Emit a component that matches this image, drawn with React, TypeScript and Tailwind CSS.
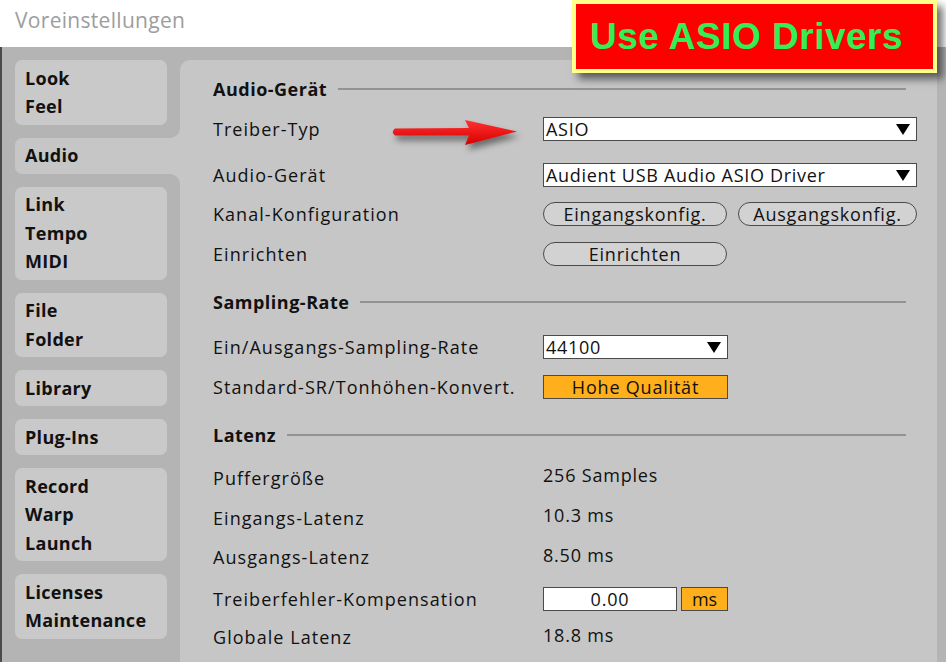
import React from "react";

// Sidebar tab groups
const tabs: string[][] = [
  ["Look", "Feel"],
  ["Audio"],
  ["Link", "Tempo", "MIDI"],
  ["File", "Folder"],
  ["Library"],
  ["Plug-Ins"],
  ["Record", "Warp", "Launch"],
  ["Licenses", "Maintenance"],
];

const Triangle = () => (
  <svg width="14" height="11" viewBox="0 0 14 11" className="shrink-0">
    <polygon points="0,0 14,0 7,11" fill="#000" />
  </svg>
);

const Dropdown: React.FC<{ value: string; className?: string }> = ({ value, className = "" }) => (
  <div
    className={
      "h-[24px] bg-white border-[1.5px] border-[#4a4a4a] flex items-center justify-between pl-[2px] pr-[6px] tracking-[0.7px] " +
      className
    }
  >
    <span>{value}</span>
    <Triangle />
  </div>
);

const Pill: React.FC<{ children: React.ReactNode; className?: string }> = ({ children, className = "" }) => (
  <div
    className={
      "h-[24px] rounded-full bg-[#d2d2d2] border-[1.5px] border-[#4a4a4a] flex items-center justify-center tracking-[0.8px] " +
      className
    }
  >
    {children}
  </div>
);

const Heading: React.FC<{ title: string; className?: string }> = ({ title, className = "" }) => (
  <div className={"h-[28px] flex items-center " + className}>
    <span className="font-bold tracking-[0.5px]">{title}</span>
    <div className="flex-1 h-[2px] bg-[#939393] ml-[11px] mr-[11px]" />
  </div>
);

const Row: React.FC<{ label: string; className?: string; children?: React.ReactNode }> = ({
  label,
  className = "",
  children,
}) => (
  <div className={"h-[24px] flex items-center " + className}>
    <span className="w-[330px] shrink-0 tracking-[1.05px] whitespace-nowrap">{label}</span>
    {children}
  </div>
);

export default function App() {
  return (
    <div className="relative w-[946px] h-[662px] overflow-hidden bg-[#b4b4b4] font-['Open_Sans',sans-serif] text-[18px] text-[#111]">
      {/* Title bar */}
      <div className="h-[47px] bg-white pl-[15px] pt-[5px] text-[21px] leading-[30px] tracking-[0.3px] text-[#9d9d9d]">
        Voreinstellungen
      </div>

      <div className="flex border-l-[2px] border-[#4b4b4b] pl-[13px] pt-[13px] h-[615px]">
        {/* Sidebar */}
        <div className="w-[165px] shrink-0 flex flex-col gap-[13px]">
          {tabs.map((group) => {
            const selected = group[0] === "Audio";
            return (
              <div key={group[0]} className="relative">
                <div
                  className={
                    selected
                      ? "w-[165px] bg-[#c6c6c6] rounded-l-[7px] pl-[10px] pt-[3.5px] pb-[4px] font-bold leading-[28.5px] tracking-[0.3px]"
                      : "w-[152px] bg-[#c9c9c9] rounded-[7px] pl-[10px] pt-[3.5px] pb-[4px] font-bold leading-[28.5px] tracking-[0.3px]"
                  }
                >
                  {group.map((t) => (
                    <div key={t}>{t}</div>
                  ))}
                </div>
                {selected && (
                  <>
                    <div className="absolute right-0 top-[-10px] w-[10px] h-[10px] bg-[#c6c6c6]">
                      <div className="w-full h-full bg-[#b4b4b4] rounded-br-[10px]" />
                    </div>
                    <div className="absolute right-0 bottom-[-10px] w-[10px] h-[10px] bg-[#c6c6c6]">
                      <div className="w-full h-full bg-[#b4b4b4] rounded-tr-[10px]" />
                    </div>
                  </>
                )}
              </div>
            );
          })}
        </div>

        {/* Main panel */}
        <div className="flex-1 mr-[9px] bg-[#c6c6c6] rounded-tl-[10px] pl-[33px] pr-[20px] pt-[15px] flex flex-col">
          <Heading title="Audio-Gerät" />
          <Row label="Treiber-Typ" className="mt-[14px]">
            <Dropdown value="ASIO" className="w-[374px]" />
          </Row>
          <Row label="Audio-Gerät" className="mt-[22px]">
            <Dropdown value="Audient USB Audio ASIO Driver" className="w-[374px]" />
          </Row>
          <Row label="Kanal-Konfiguration" className="mt-[15px]">
            <Pill className="w-[184px]">Eingangskonfig.</Pill>
            <Pill className="w-[179px] ml-[11px]">Ausgangskonfig.</Pill>
          </Row>
          <Row label="Einrichten" className="mt-[16px]">
            <Pill className="w-[184px]">Einrichten</Pill>
          </Row>

          <Heading title="Sampling-Rate" className="mt-[22px]" />
          <Row label="Ein/Ausgangs-Sampling-Rate" className="mt-[19px]">
            <Dropdown value="44100" className="w-[185px]" />
          </Row>
          <Row label="Standard-SR/Tonhöhen-Konvert." className="mt-[16px]">
            <div className="w-[185px] h-[24px] bg-[#ffae1c] border-[1.5px] border-[#4a4a4a] flex items-center justify-center tracking-[0.8px]">
              Hohe Qualität
            </div>
          </Row>

          <Heading title="Latenz" className="mt-[22px]" />
          <Row label="Puffergröße" className="mt-[17px]">
            <span className="pb-[6px] tracking-[0.8px]">256 Samples</span>
          </Row>
          <Row label="Eingangs-Latenz" className="mt-[16px]">
            <span className="pb-[6px] tracking-[0.8px]">10.3 ms</span>
          </Row>
          <Row label="Ausgangs-Latenz" className="mt-[15px]">
            <span className="pb-[4px] tracking-[0.8px]">8.50 ms</span>
          </Row>
          <Row label="Treiberfehler-Kompensation" className="mt-[18px]">
            <div className="w-[134px] h-[24px] bg-white border-[1.5px] border-[#4a4a4a] flex items-center justify-center tracking-[0.8px]">
              0.00
            </div>
            <div className="w-[47px] h-[24px] ml-[4px] bg-[#ffae1c] border-[1.5px] border-[#4a4a4a] flex items-center justify-center">
              ms
            </div>
          </Row>
          <Row label="Globale Latenz" className="mt-[14px]">
            <span className="pb-[4px] tracking-[0.8px]">18.8 ms</span>
          </Row>
        </div>
      </div>

      {/* Red arrow annotation */}
      <svg
        className="absolute left-[385px] top-[110px] drop-shadow-[3px_5px_3px_rgba(0,0,0,0.45)]"
        width="140"
        height="45"
        viewBox="0 0 140 45"
      >
        <defs>
          <linearGradient id="arrowRed" x1="0" y1="0" x2="0" y2="1">
            <stop offset="0" stopColor="#ff3030" />
            <stop offset="1" stopColor="#d80000" />
          </linearGradient>
        </defs>
        <path
          d="M10 18.5 L84 18 L80 10 L132 21.5 L80 35 L84 25.5 L10 25.5 Q5.5 22 10 18.5 Z"
          fill="url(#arrowRed)"
        />
      </svg>

      {/* Callout */}
      <div className="absolute left-[572px] top-0 w-[365px] h-[73px] bg-[#ff0000] border-[4px] border-[#ffff8c] shadow-[6px_6px_8px_rgba(0,0,0,0.55)] flex items-center pl-[14px]">
        <span className="font-['Liberation_Sans',Arial,sans-serif] font-bold text-[37px] leading-none tracking-[0.5px] text-[#33ee55]">
          Use ASIO Drivers
        </span>
      </div>
    </div>
  );
}
